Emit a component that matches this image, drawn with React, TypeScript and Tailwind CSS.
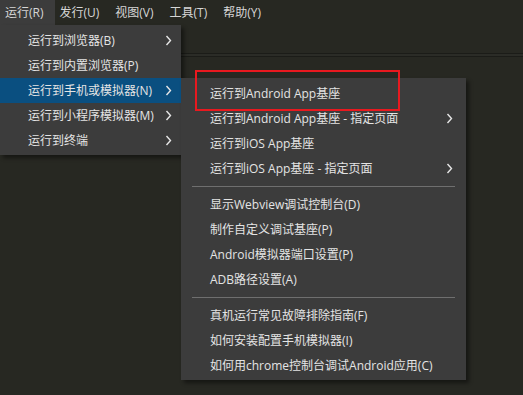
import React from 'react';

const font = { fontFamily: '"Open Sans", "Noto Sans CJK SC", sans-serif' };

type Item = { label: string; sub?: boolean; active?: boolean } | 'sep';

const runMenu: Item[] = [
  { label: '运行到浏览器(B)', sub: true },
  { label: '运行到内置浏览器(P)' },
  { label: '运行到手机或模拟器(N)', sub: true, active: true },
  { label: '运行到小程序模拟器(M)', sub: true },
  { label: '运行到终端', sub: true },
];

const phoneMenu: Item[] = [
  { label: '运行到Android App基座' },
  { label: '运行到Android App基座 - 指定页面', sub: true },
  { label: '运行到iOS App基座' },
  { label: '运行到iOS App基座 - 指定页面', sub: true },
  'sep',
  { label: '显示Webview调试控制台(D)' },
  { label: '制作自定义调试基座(P)' },
  { label: 'Android模拟器端口设置(P)' },
  { label: 'ADB路径设置(A)' },
  'sep',
  { label: '真机运行常见故障排除指南(F)' },
  { label: '如何安装配置手机模拟器(I)' },
  { label: '如何用chrome控制台调试Android应用(C)' },
];

const Chevron = () => (
  <svg width="7" height="11" viewBox="0 0 7 11" fill="none">
    <path d="M1.5 1 L5.5 5.5 L1.5 10" stroke="#e6e6e6" strokeWidth="1.4" />
  </svg>
);

const MenuList: React.FC<{ items: Item[]; textPl: string; chevronPr: string }> = ({ items, textPl, chevronPr }) => (
  <>
    {items.map((item, i) =>
      item === 'sep' ? (
        <div key={i} className="h-[11px] flex items-center px-[11px]">
          <div className="h-px w-full bg-[#6f6f6f]" />
        </div>
      ) : (
        <div
          key={i}
          className={`h-[25px] flex items-center justify-between ${textPl} ${chevronPr} ${
            item.active ? 'bg-[#0a4f80]' : ''
          }`}
        >
          <span className="text-[12px] text-[#e4e4e4] whitespace-nowrap">{item.label}</span>
          {item.sub && <Chevron />}
        </div>
      )
    )}
  </>
);

export default function App() {
  const bar = ['运行(R)', '发行(U)', '视图(V)', '工具(T)', '帮助(Y)'];
  return (
    <div className="relative w-[523px] h-[395px] bg-[#272822] overflow-hidden" style={font}>
      {/* menu bar */}
      <div className="flex h-[25px] items-center bg-[#272822]">
        {bar.map((b, i) => (
          <div
            key={b}
            className={`h-full flex items-center pl-[5px] pr-[11px] text-[12px] text-[#d6d6d6] ${
              i === 0 ? 'bg-[#3c3c3c]' : ''
            }`}
          >
            {b}
          </div>
        ))}
      </div>
      {/* tab strip edge */}
      <div className="h-[28px]" />
      <div className="h-px bg-[#1b1c18]" />
      <div className="h-[2px] bg-[#2b2c27]" />
      <div className="h-px bg-[#1b1c18]" />

      {/* first dropdown */}
      <div className="absolute left-0 top-[25px] w-[181px] bg-[#3c3c3c] pt-[3px] pb-[2px] shadow-[3px_3px_4px_rgba(0,0,0,0.45)]">
        <MenuList items={runMenu} textPl="pl-[28px]" chevronPr="pr-[9px]" />
      </div>

      {/* second dropdown */}
      <div className="absolute left-[181px] top-[78px] w-[285px] bg-[#3c3c3c] pt-[3px] pb-[2px] shadow-[3px_3px_4px_rgba(0,0,0,0.45)]">
        <MenuList items={phoneMenu} textPl="pl-[29px]" chevronPr="pr-[13px]" />
      </div>

      {/* red highlight box */}
      <div className="absolute left-[195px] top-[70px] w-[205px] h-[41px] border-2 border-[#e8191f]" />
    </div>
  );
}
